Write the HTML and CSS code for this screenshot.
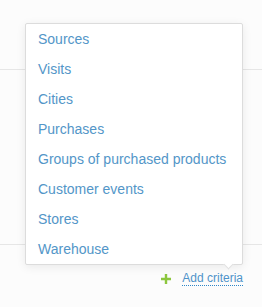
FILE: index.html
```html
<!DOCTYPE html>
<html lang="en">
<head>
    <meta charset="UTF-8">
    <meta name="viewport" content="width=device-width, initial-scale=1.0">
    <title>Criteria</title>
    <link rel="stylesheet" href="styles.css">
</head>
<body>
    <div class="page">
        <div class="row row-top"></div>
        <div class="row row-mid"></div>
        <div class="footer">
            <a class="add-link" href="#">
                <svg class="plus" width="10" height="10" viewBox="0 0 10 10">
                    <path d="M5 0v10M0 5h10" stroke="#8cc63e" stroke-width="2.4"/>
                </svg>
                <span class="add-text">Add criteria</span>
            </a>
        </div>

        <div class="menu">
            <ul class="menu-list">
                <li>Sources</li>
                <li>Visits</li>
                <li>Cities</li>
                <li>Purchases</li>
                <li>Groups of purchased products</li>
                <li>Customer events</li>
                <li>Stores</li>
                <li>Warehouse</li>
            </ul>
            <div class="menu-arrow"></div>
        </div>
    </div>
</body>
</html>
```
FILE: styles.css
```css
body {
    margin: 0;
    font-family: "Liberation Sans", Arial, sans-serif;
    background: #fcfcfc;
}
.page {
    position: relative;
    width: 262px;
    height: 307px;
}
.row {
    border-bottom: 1px solid #e6e6e6;
}
.row-top {
    height: 69px;
}
.row-mid {
    height: 174px;
}
.footer {
    display: flex;
    justify-content: flex-end;
    padding: 26px 19px 0 0;
}
.add-link {
    display: flex;
    align-items: center;
    gap: 11px;
    text-decoration: none;
    font-size: 12px;
    color: #4f93c9;
}
.add-text {
    border-bottom: 1px dotted #2f86c8;
    line-height: 14px;
}
.menu {
    position: absolute;
    left: 25px;
    top: 23px;
    width: 216px;
    background: #fff;
    border: 1px solid #dcdcdc;
    border-radius: 2px;
    box-shadow: 0 2px 10px rgba(0, 0, 0, 0.08);
}
.menu-list {
    list-style: none;
    margin: 0;
    padding: 0;
}
.menu-list li {
    height: 30px;
    line-height: 30px;
    padding-left: 12px;
    font-size: 14px;
    color: #5396c8;
}
.menu-arrow {
    position: absolute;
    right: 10px;
    bottom: -4px;
    width: 6px;
    height: 6px;
    background: #fff;
    border-right: 1px solid #e0e0e0;
    border-bottom: 1px solid #e0e0e0;
    transform: rotate(45deg);
}
```
